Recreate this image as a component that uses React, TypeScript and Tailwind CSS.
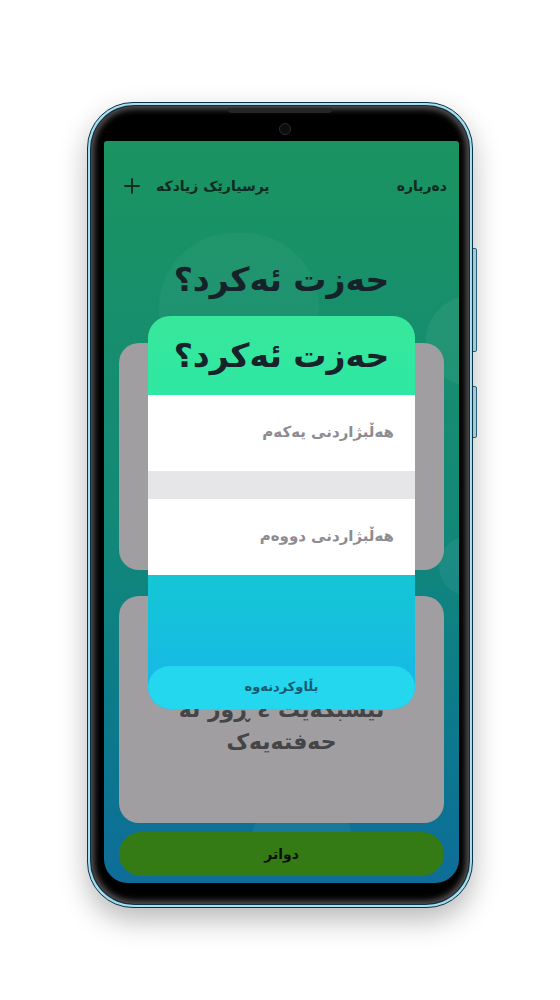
import { Plus } from 'lucide-react';

const font = "font-['DejaVu_Sans','Noto_Sans',sans-serif]";

const Bubbles = () => (
  <>
    <div className="absolute left-[55px] top-[92px] h-[150px] w-[160px] rounded-full bg-white/[0.035]" />
    <div className="absolute left-[322px] top-[155px] h-[90px] w-[90px] rounded-full bg-white/[0.05]" />
    <div className="absolute left-[335px] top-[395px] h-[60px] w-[60px] rounded-full bg-white/[0.05]" />
    <div className="absolute left-[148px] top-[670px] h-[50px] w-[100px] rounded-full bg-white/[0.05]" />
  </>
);

const Modal = () => (
  <div className="absolute inset-0 flex items-center justify-center">
    <div className="flex h-[393px] w-[267px] flex-col overflow-hidden rounded-[22px]">
      <div className="flex h-[79px] items-center justify-center bg-gradient-to-b from-[#38e89a] to-[#2ee7a3]">
        <h2 className="text-[33px] font-bold leading-none text-[#17222b]">حەزت ئەکرد؟</h2>
      </div>
      <button type="button" className="flex h-[76px] items-center bg-white pr-[21px] text-[15px] font-bold text-[#8d8c91]">
        هەڵبژاردنی یەکەم
      </button>
      <div className="h-[28px] bg-[#e6e5e8]" />
      <button type="button" className="flex h-[76px] items-center bg-white pr-[21px] text-[15px] font-bold text-[#8d8c91]">
        هەڵبژاردنی دووەم
      </button>
      <div className="flex flex-1 flex-col justify-end bg-gradient-to-b from-[#14c6d4] to-[#19b6ea]">
        <button type="button" className="h-[43px] rounded-full bg-[#25d6ef] text-[13px] font-bold text-[#165a70]">
          بڵاوکردنەوە
        </button>
      </div>
    </div>
  </div>
);

const Screen = () => (
  <div
    dir="rtl"
    className={`relative h-[742px] w-[355px] overflow-hidden rounded-b-[24px] rounded-t-[3px] bg-gradient-to-b from-[#1b9461] via-[#138977] to-[#0e6d99] ${font}`}
  >
    <Bubbles />
    <div className="relative flex h-full flex-col px-[15px]">
      <header className="mt-[34px] flex h-[22px] items-center justify-between pl-[1px] text-[14px] font-bold text-[#0f2a1e]">
        <span className="-mr-[3px]">دەربارە</span>
        <div className="flex items-center gap-[12px]">
          <span>پرسیارێک زیادکە</span>
          <Plus className="h-[24px] w-[24px] text-[#0f2a1e]" strokeWidth={1.8} />
        </div>
      </header>
      <h1 className="mt-[63px] text-center text-[33px] font-bold leading-[40px] text-[#15222a]">حەزت ئەکرد؟</h1>
      <div className="mt-[43px] h-[227px] rounded-[20px] bg-[#a09ea1]" />
      <div className="mt-[26px] flex h-[227px] flex-col items-center justify-center rounded-[20px] bg-[#a09ea1] text-center text-[22px] font-bold leading-[32px] text-[#454446]">
        <span>ئایا حەزت ئەکرد تەنها</span>
        <span>ئیشبکەیت ٤ ڕۆژ لە</span>
        <span>حەفتەیەک</span>
      </div>
      <button type="button" className="mt-[9px] h-[44px] rounded-full bg-[#347b15] text-[14px] font-bold text-[#0b0f08]">
        دواتر
      </button>
    </div>
    <Modal />
  </div>
);

export default function App() {
  return (
    <div className="flex h-[1000px] w-full justify-center bg-white pt-[102px]">
      <div className="relative h-[806px] w-[386px]">
        <div className="absolute right-[-4px] top-[146px] h-[104px] w-[5px] rounded-r-[2px] border border-[#2d6d86] bg-[#bfe6f2]" />
        <div className="absolute right-[-4px] top-[284px] h-[52px] w-[5px] rounded-r-[2px] border border-[#2d6d86] bg-[#bfe6f2]" />
        <div className="relative h-full w-full rounded-[46px] border border-[#0b3346] bg-[#a7dcec] p-[2px] shadow-[0_12px_28px_rgba(0,0,0,0.28)]">
          <div className="h-full w-full rounded-[44px] bg-[#0b3346] p-[1px]">
            <div className="relative h-full w-full rounded-[43px] bg-black pb-[21px] pl-[13px] pr-[10px] pt-[35px] shadow-[inset_0_0_6px_3px_#5b5659]">
              <div className="absolute left-1/2 top-[2px] h-[5px] w-[104px] -translate-x-1/2 rounded-b-[4px] bg-[#262628]" />
              <div className="absolute left-[188px] top-[17px] h-[12px] w-[12px] rounded-full border border-[#2b2d33] bg-[#0c0d10]" />
              <Screen />
            </div>
          </div>
        </div>
      </div>
    </div>
  );
}
